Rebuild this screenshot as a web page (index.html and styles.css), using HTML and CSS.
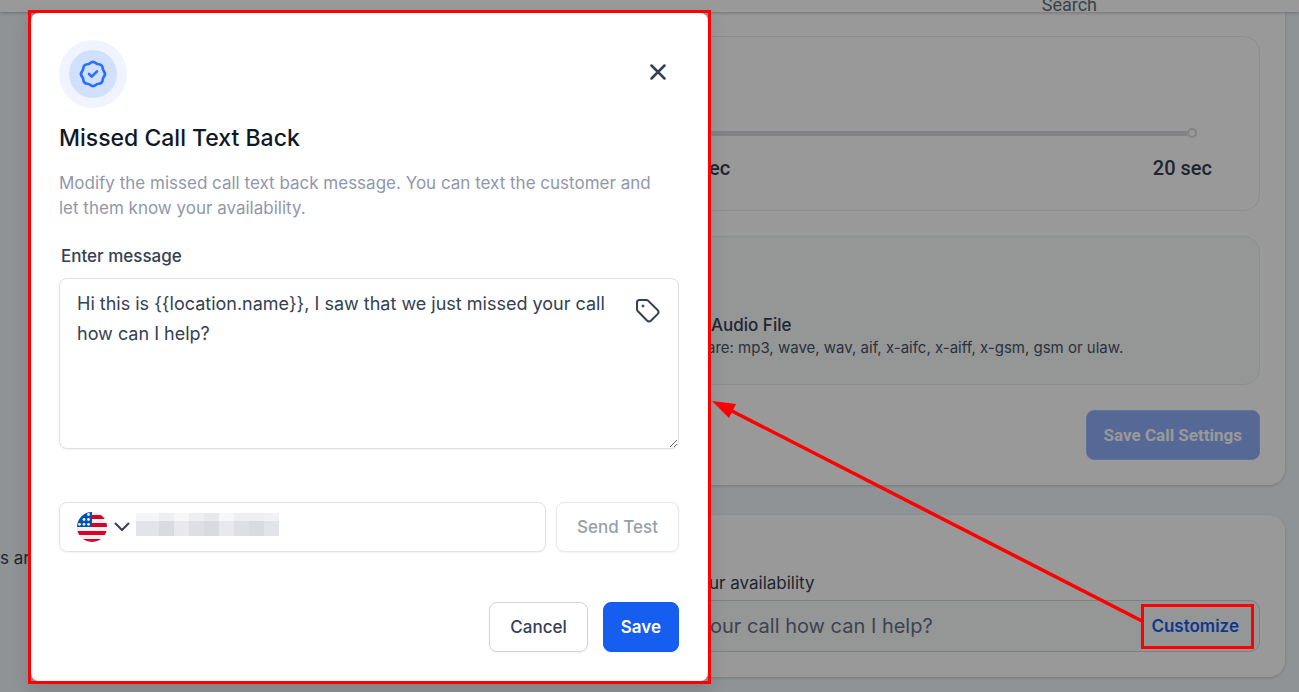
FILE: index.html
```html
<!DOCTYPE html>
<html lang="en">
<head>
    <meta charset="UTF-8">
    <meta name="viewport" content="width=device-width, initial-scale=1.0">
    <title>Missed Call Text Back</title>
    <link rel="stylesheet" href="styles.css">
</head>
<body>

<header class="topbar">
    <a class="topbar-search" href="#">Search</a>
</header>

<div class="page">
    <aside class="side-note">s ar</aside>

    <main class="settings">
        <section class="card card-first">
            <div class="box timeout-box">
                <div class="slider">
                    <div class="slider-rail"></div>
                    <div class="slider-dot"></div>
                </div>
                <div class="slider-labels">
                    <span>ec</span>
                    <span>20 sec</span>
                </div>
            </div>
            <div class="box box-muted upload-box">
                <h3 class="upload-title">Audio File</h3>
                <p class="upload-hint">are: mp3, wave, wav, aif, x-aifc, x-aiff, x-gsm, gsm or ulaw.</p>
            </div>
            <button class="save-settings" type="button">Save Call Settings</button>
        </section>

        <section class="card card-second">
            <p class="availability">ur availability</p>
            <div class="preview">
                <span class="preview-text">our call how can I help?</span>
                <a class="customize" href="#">Customize</a>
            </div>
        </section>
    </main>
</div>

<div class="overlay">
    <div class="highlight">
        <form class="modal" role="dialog" aria-labelledby="modal-title">
            <div class="modal-top">
                <div class="badge">
                    <div class="badge-inner">
                        <svg width="32" height="32" viewBox="0 0 24 24" fill="none" stroke="#2970ff" stroke-width="2" stroke-linecap="round" stroke-linejoin="round">
                            <path d="M9 12l2 2 4-4M7.835 4.697a3.42 3.42 0 001.946-.806 3.42 3.42 0 014.438 0 3.42 3.42 0 001.946.806 3.42 3.42 0 013.138 3.138 3.42 3.42 0 00.806 1.946 3.42 3.42 0 010 4.438 3.42 3.42 0 00-.806 1.946 3.42 3.42 0 01-3.138 3.138 3.42 3.42 0 00-1.946.806 3.42 3.42 0 01-4.438 0 3.42 3.42 0 00-1.946-.806 3.42 3.42 0 01-3.138-3.138 3.42 3.42 0 00-.806-1.946 3.42 3.42 0 010-4.438 3.42 3.42 0 00.806-1.946 3.42 3.42 0 013.138-3.138z"/>
                        </svg>
                    </div>
                </div>
                <button class="close" type="button" aria-label="Close">
                    <svg width="16" height="16" viewBox="0 0 16 16" fill="none" stroke="#344054" stroke-width="2.5" stroke-linecap="round">
                        <path d="M1.500 1.500l13 13M14.500 1.500l-13 13"/>
                    </svg>
                </button>
            </div>

            <h2 class="modal-title" id="modal-title">Missed Call Text Back</h2>
            <p class="modal-desc">Modify the missed call text back message. You can text the customer and let them know your availability.</p>

            <label class="message-label" for="message">Enter message</label>
            <div class="message-wrap">
                <textarea class="message" id="message">Hi this is {{location.name}}, I saw that we just missed your call how can I help?</textarea>
                <button class="tag-btn" type="button" aria-label="Tags">
                    <svg width="26" height="26" viewBox="0 0 26 26" fill="none" stroke="#344054" stroke-width="2" stroke-linejoin="round">
                        <path d="M2 4.500a2.500 2.500 0 0 1 2.500-2.500h6.700a3 3 0 0 1 2.100.9l9.500 9.300a2.600 2.600 0 0 1 0 3.700l-6.900 6.900a2.600 2.600 0 0 1-3.700 0l-9.300-9.500a3 3 0 0 1-.9-2.100z"/>
                        <circle cx="8" cy="8" r="1" fill="#344054" stroke-width="1"/>
                    </svg>
                </button>
            </div>

            <div class="test-row">
                <div class="phone">
                    <button class="country" type="button" aria-label="Country">
                        <svg width="30" height="30" viewBox="0 0 30 30">
                            <clipPath id="round"><circle cx="15" cy="15" r="15"/></clipPath>
                            <g clip-path="url(#round)">
                                <rect width="30" height="30" fill="#f0f0f0"/>
                                <path d="M15 3h15v4H15zM15 11h15v4H15zM0 19h30v4H0zM0 27h30v3H0z" fill="#d80027"/>
                                <rect width="15" height="15" fill="#0052b4"/>
                                <g fill="#f0f0f0">
                                    <circle cx="11.500" cy="2.500" r="1.400"/>
                                    <circle cx="7" cy="7.500" r="1.400"/>
                                    <circle cx="11.500" cy="7.500" r="1.400"/>
                                    <circle cx="2.500" cy="12.300" r="1.400"/>
                                    <circle cx="7" cy="12.300" r="1.400"/>
                                    <circle cx="11.500" cy="12.300" r="1.400"/>
                                </g>
                            </g>
                        </svg>
                        <svg width="16" height="10" viewBox="0 0 16 10" fill="none" stroke="#344054" stroke-width="2" stroke-linecap="round" stroke-linejoin="round">
                            <path d="M1.500 1.500L8 8l6.500-6.500"/>
                        </svg>
                    </button>
                    <!-- masked number -->
                    <svg class="masked" width="143" height="23" viewBox="0 0 143 23" shape-rendering="crispEdges">
                        <path d="M0 0h23v8H0z" fill="#f5f6f7"/>
                        <path d="M23 0h15v8H23zM53 0h15v8H53zM98 0h30v8H98z" fill="#eeeff1"/>
                        <path d="M38 0h15v8H38zM83 0h15v8H83z" fill="#f6f7f8"/>
                        <path d="M68 0h15v8H68z" fill="#e7e8ec"/>
                        <path d="M128 0h15v8h-15z" fill="#f2f2f4"/>
                        <path d="M0 8h23v15H0zM128 8h15v15h-15z" fill="#e3e4e9"/>
                        <path d="M23 8h15v15H23zM68 8h15v15H68z" fill="#dadbe1"/>
                        <path d="M38 8h15v15H38zM83 8h15v15H83z" fill="#e8e8ed"/>
                        <path d="M53 8h15v15H53zM98 8h15v15H98z" fill="#dedfe4"/>
                        <path d="M113 8h15v15h-15z" fill="#d8dbe0"/>
                    </svg>
                    <input class="phone-input" type="tel" aria-label="Phone number">
                </div>
                <button class="btn btn-test" type="button" disabled>Send Test</button>
            </div>

            <div class="actions">
                <button class="btn btn-cancel" type="button">Cancel</button>
                <button class="btn btn-save" type="button">Save</button>
            </div>
        </form>
    </div>
</div>

<div class="customize-frame"></div>
<svg class="arrow" width="432" height="224" viewBox="0 0 432 224">
    <path d="M430 221L18 10" stroke="#ff0000" stroke-width="3.500"/>
    <path d="M0 1L24 4L17 18z" fill="#ff0000"/>
</svg>

</body>
</html>
```

FILE: styles.css
```css
* {
    box-sizing: border-box;
}
body {
    margin: 0;
    height: 100vh;
    overflow: hidden;
    background-color: #eef5f8;
    font-family: Inter, "Open Sans", sans-serif;
    font-size: 17px;
    color: #344054;
}
h2, h3, p {
    margin: 0;
}
button {
    font-family: inherit;
    cursor: pointer;
}
svg {
    display: block;
    flex: none;
}
.topbar {
    position: relative;
    display: flex;
    justify-content: flex-end;
    align-items: flex-end;
    height: 12px;
    padding-right: 202px;
    background-color: #fff;
    box-shadow: 0 1px 3px rgba(0, 0, 0, 0.25);
}
.topbar-search {
    font-family: Roboto, sans-serif;
    font-size: 18px;
    line-height: 14px;
    color: #607179;
    text-decoration: none;
}

/* settings behind the dialog */
.page {
    display: flex;
    padding-right: 14px;
}
.side-note {
    width: 320px;
    padding-top: 536px;
    line-height: 20px;
}
.settings {
    flex: 1;
}
.card {
    padding: 24px 25px 25px;
    background-color: #fff;
    border-radius: 16px;
    box-shadow: 0 1px 3px rgba(16, 24, 40, 0.2);
}
.card-first {
    display: flex;
    flex-direction: column;
    gap: 25px;
    border-radius: 0 0 16px 16px;
}
.card-second {
    margin-top: 30px;
    padding-top: 57px;
}
.box {
    border: 1px solid #eaecf0;
    border-radius: 16px;
}
.box-muted {
    background-color: #f9fafb;
}
.timeout-box {
    padding: 90px 47px 30px 363px;
}
.slider {
    display: flex;
    align-items: center;
    height: 12px;
    padding-right: 15px;
}
.slider-rail {
    flex: 1;
    height: 5px;
    background-color: #dbdbdf;
}
.slider-dot {
    width: 10px;
    height: 10px;
    border: 2px solid #dbdbdf;
    border-radius: 50%;
    background-color: #fff;
}
.slider-labels {
    display: flex;
    justify-content: space-between;
    padding-top: 17px;
    font-family: Roboto, sans-serif;
    font-size: 20px;
    font-weight: 500;
    line-height: 24px;
}
.upload-box {
    height: 149px;
    padding: 76px 24px 0 361px;
}
.upload-title {
    padding-left: 4px;
    font-size: 17px;
    font-weight: 500;
    line-height: 24px;
}
.upload-hint {
    font-size: 15px;
    line-height: 22px;
    color: #475467;
}
.save-settings {
    align-self: flex-end;
    height: 50px;
    padding: 0 17px;
    border: 1px solid #a3bffa;
    border-radius: 8px;
    background-color: #8eaefa;
    color: #fff;
    font-family: Roboto, sans-serif;
    font-size: 17px;
    font-weight: 700;
}
.availability {
    padding: 0 0 6px 364px;
    line-height: 22px;
}
.preview {
    display: flex;
    justify-content: space-between;
    align-items: center;
    height: 52px;
    padding: 0 20px 0 364px;
    border: 1px solid #d0d5dd;
    border-radius: 10px;
    background-color: #f9fafb;
}
.preview-text {
    font-size: 20px;
    color: #667085;
}
.customize {
    font-weight: 600;
    color: #155eef;
    text-decoration: none;
}

/* dialog */
.overlay {
    position: absolute;
    inset: 0;
    padding: 10px 28px;
    background-color: rgba(0, 0, 0, 0.4);
}
.highlight {
    width: 683px;
    max-width: 100%;
    border: 3px solid #ff0000;
    box-shadow: 0 8px 16px rgba(0, 0, 0, 0.1);
}
.modal {
    padding: 27px 29px 29px 28px;
    background-color: #fff;
    border-radius: 8px;
}
.modal-top {
    display: flex;
    justify-content: space-between;
    align-items: flex-start;
}
.badge {
    padding: 10px;
    border-radius: 50%;
    background-color: #eff4ff;
}
.badge-inner {
    padding: 8px;
    border-radius: 50%;
    background-color: #d1e0ff;
}
.close {
    display: block;
    padding: 12px 13px;
    margin-top: 12px;
    border: none;
    background: none;
}
.tag-btn {
    position: absolute;
    top: 20px;
    right: 18px;
    padding: 0;
    border: none;
    background: none;
}
.modal-title {
    margin-top: 15px;
    font-size: 23px;
    font-weight: 500;
    line-height: 30px;
    color: #101828;
}
.modal-desc {
    margin-top: 18px;
    padding-right: 10px;
    font-size: 17px;
    line-height: 25px;
    color: #8f98aa;
}
.message-label {
    display: block;
    margin: 23px 0 10px 2px;
    font-size: 17px;
    font-weight: 500;
    line-height: 24px;
}
.message-wrap {
    position: relative;
}
.message {
    display: block;
    width: 100%;
    height: 171px;
    padding: 10px 50px 9px 17px;
    border: 1px solid #e0e0e6;
    border-radius: 8px;
    box-shadow: 0 1px 2px rgba(16, 24, 40, 0.05);
    font-family: inherit;
    font-size: 18px;
    line-height: 30px;
    color: #344054;
    resize: both;
}
.test-row {
    display: flex;
    gap: 10px;
    margin-top: 53px;
}
.phone {
    display: flex;
    flex: 1;
    align-items: center;
    gap: 6px;
    height: 50px;
    padding: 0 17px;
    border: 1px solid #e0e0e6;
    border-radius: 8px;
    box-shadow: 0 1px 2px rgba(16, 24, 40, 0.05);
}
.country {
    display: flex;
    align-items: center;
    gap: 7px;
    padding: 0;
    border: none;
    background: none;
}
.masked {
    margin-bottom: 5px;
}
.phone-input {
    flex: 1;
    min-width: 0;
    border: none;
    outline: none;
    font-size: 17px;
}
.btn {
    height: 50px;
    padding: 0 20px;
    border: 1px solid #d0d5dd;
    border-radius: 8px;
    background-color: #fff;
    color: #344054;
    font-size: 17px;
    font-weight: 500;
    box-shadow: 0 1px 2px rgba(16, 24, 40, 0.05);
}
.btn-test {
    border-color: #e7e9ee;
    color: #999fa9;
}
.actions {
    display: flex;
    justify-content: flex-end;
    gap: 15px;
    margin-top: 50px;
}
.btn-save {
    padding: 0 17px;
    border-color: #155eef;
    background-color: #155eef;
    color: #fff;
    font-weight: 600;
}

/* callout marks */
.customize-frame {
    position: absolute;
    top: 604px;
    right: 45px;
    width: 113px;
    height: 45px;
    border: 3px solid #ff0000;
}
.arrow {
    position: absolute;
    top: 400px;
    right: 155px;
}
```
